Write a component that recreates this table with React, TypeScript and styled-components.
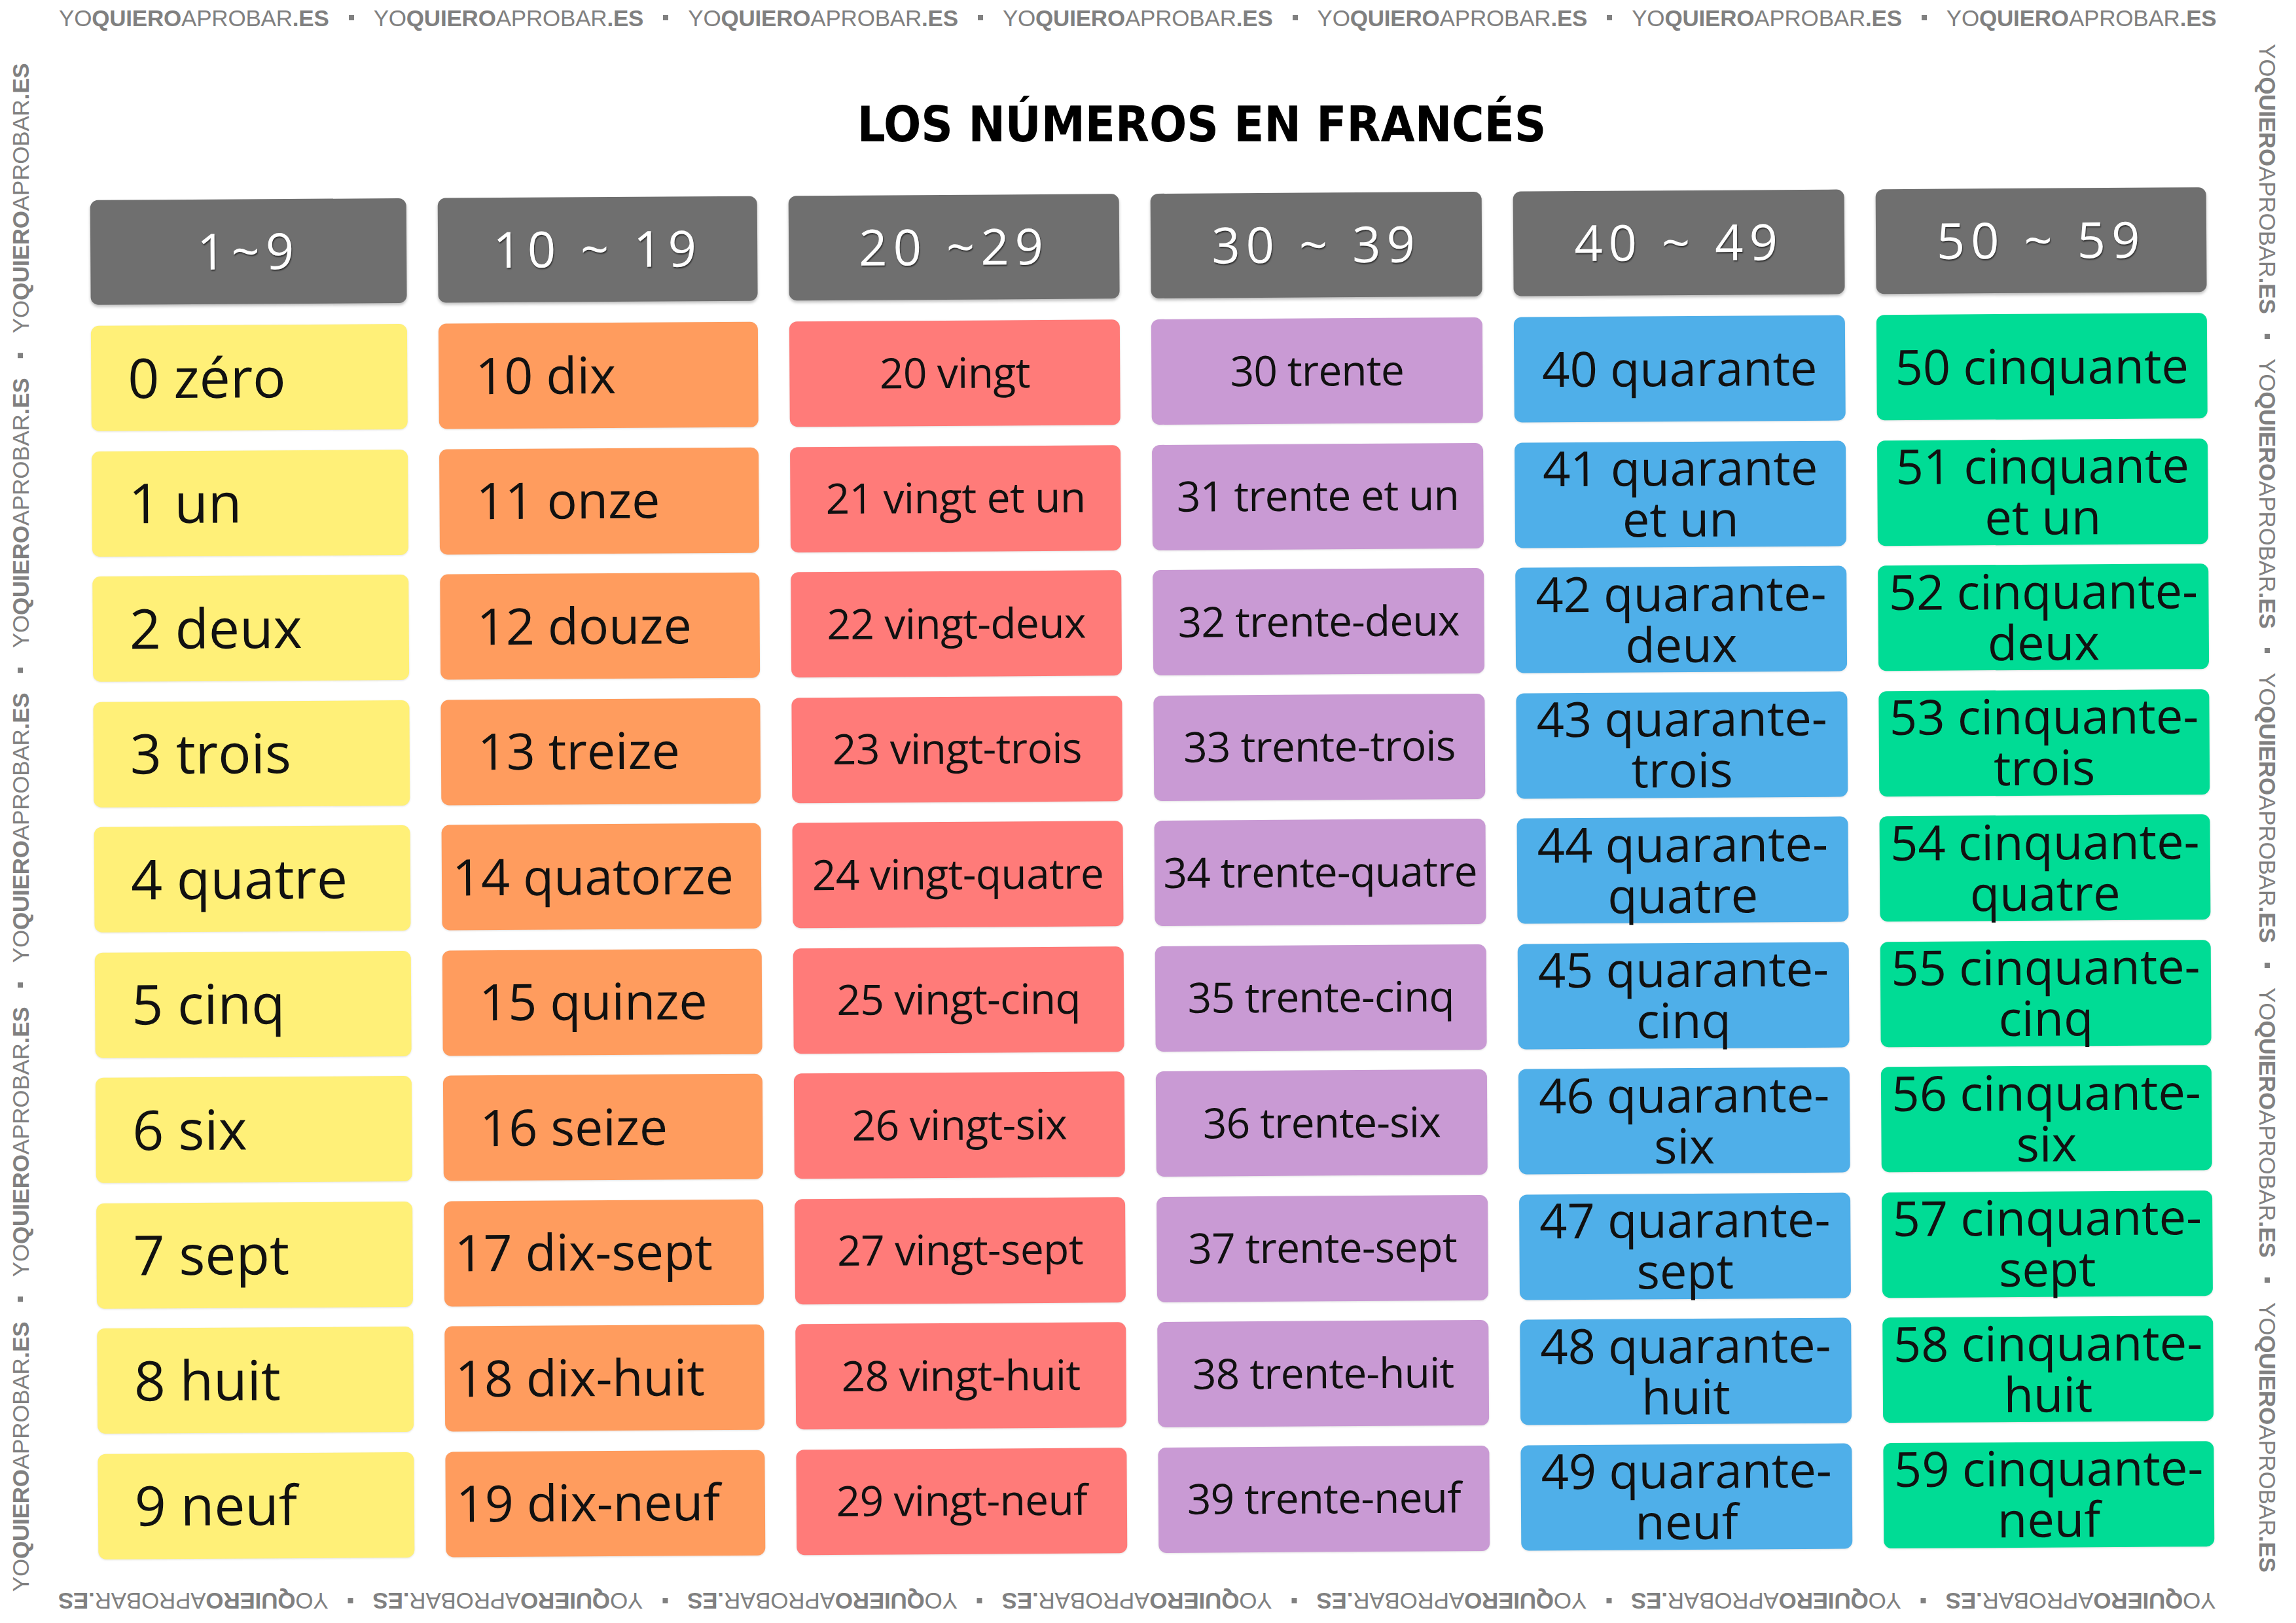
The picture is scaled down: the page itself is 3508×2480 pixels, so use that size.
import React from "react";
import styled, { createGlobalStyle } from "styled-components";

const GlobalStyle = createGlobalStyle`
  html, body {
    margin: 0;
    padding: 0;
    background: #ffffff;
  }
  body {
    width: 3508px;
    height: 2480px;
    overflow: hidden;
  }
`;

const Page = styled.div`
  width: 3508px;
  height: 2480px;
  display: grid;
  grid-template-columns: 62px 1fr 88px;
  grid-template-rows: 54px 1fr 68px;
  background: #ffffff;
  font-family: "Liberation Sans", Arial, sans-serif;
`;

/* ---------- watermark frame ---------- */

const EdgeTop = styled.div`
  grid-column: 2;
  grid-row: 1;
  display: flex;
  align-items: center;
  padding-left: 28px;
`;

const EdgeBottom = styled.div`
  grid-column: 2;
  grid-row: 3;
  display: flex;
  align-items: center;
  padding-left: 27px;
`;

const EdgeLeft = styled.div`
  grid-column: 1;
  grid-row: 1 / 4;
  display: flex;
  flex-direction: column;
  justify-content: flex-end;
  align-items: center;
  padding-bottom: 48px;
`;

const EdgeRight = styled.div`
  grid-column: 3;
  grid-row: 1 / 4;
  display: flex;
  flex-direction: column;
  align-items: center;
  padding-top: 67px;
`;

type Dir = "flat" | "flip" | "up" | "down";

const Strip = styled.div<{ $dir: Dir }>`
  display: inline-flex;
  align-items: center;
  white-space: nowrap;
  font-size: 35px;
  line-height: 1;
  color: #808080;
  writing-mode: ${(p) => (p.$dir === "up" || p.$dir === "down" ? "vertical-rl" : "horizontal-tb")};
  transform: ${(p) => (p.$dir === "up" || p.$dir === "flip" ? "rotate(180deg)" : "none")};
`;

const Word = styled.span`
  font-weight: 400;
  letter-spacing: -0.2px;
`;

const Bold = styled.b`
  font-weight: 700;
`;

const Dot = styled.i`
  display: block;
  width: 8px;
  height: 8px;
  margin-inline: 30px;
  background: #808080;
`;

const Watermark: React.FC<{ dir: Dir; count: number }> = ({ dir, count }) => (
  <Strip $dir={dir}>
    {Array.from({ length: count }).map((_, i) => (
      <React.Fragment key={i}>
        {i > 0 && <Dot />}
        <Word>
          YO<Bold>QUIERO</Bold>APROBAR<Bold>.ES</Bold>
        </Word>
      </React.Fragment>
    ))}
  </Strip>
);

/* ---------- sheet ---------- */

const Main = styled.main`
  grid-column: 2;
  grid-row: 2;
  display: flex;
  flex-direction: column;
  padding: 0 42px 0 82px;
`;

const Title = styled.h1`
  margin: 99px 0 0;
  padding-left: 150px;
  text-align: center;
  font-family: "DejaVu Sans Condensed", "DejaVu Sans", sans-serif;
  font-stretch: condensed;
  font-weight: 700;
  font-size: 75px;
  line-height: 75px;
  color: #000;
`;

const Board = styled.div`
  margin-top: 68px;
  display: grid;
  grid-template-columns: 483px 488px 505px 506px 506px 505px;
  column-gap: 48px;
  transform: rotate(-0.35deg);
`;

const Column = styled.div`
  display: flex;
  flex-direction: column;
  gap: 30.5px;
`;

const Head = styled.div`
  height: 160px;
  margin-bottom: 1.5px;
  display: flex;
  align-items: center;
  justify-content: center;
  background: #6f6f6f;
  border-radius: 12px;
  box-shadow: 0 3px 4px rgba(0, 0, 0, 0.25);
  color: #ffffff;
  font-family: "Open Sans", "DejaVu Sans", sans-serif;
  font-size: 76px;
  letter-spacing: 9px;
  text-shadow: 1px 2px 2px rgba(0, 0, 0, 0.55);
  padding-bottom: 6px;
  box-sizing: border-box;
`;

const Cell = styled.div<{
  $bg: string;
  $align: "left" | "center";
  $size: number;
  $squeeze: number;
  $tight?: boolean;
}>`
  height: 161px;
  box-sizing: border-box;
  display: flex;
  align-items: center;
  justify-content: ${(p) => (p.$align === "left" ? "flex-start" : "center")};
  padding: 0 ${(p) => (p.$align === "left" ? "6px" : "2px")} 4px
    ${(p) => (p.$align === "left" ? (p.$tight ? "16px" : "56px") : "2px")};
  background: ${(p) => p.$bg};
  border-radius: 12px;
  box-shadow: 0 1px 3px rgba(0, 0, 0, 0.12);
  color: #111111;
  font-family: "Open Sans", "DejaVu Sans", sans-serif;
  font-size: ${(p) => p.$size}px;
  letter-spacing: ${(p) => p.$squeeze}px;
  line-height: 78px;
  text-align: center;
  white-space: pre;
`;

type Group = {
  label: string;
  bg: string;
  align: "left" | "center";
  size: number;
  squeeze: number;
  items: string[];
};

const groups: Group[] = [
  {
    label: "1~9",
    bg: "#fff078",
    align: "left",
    size: 84,
    squeeze: 0,
    items: ["0 zéro", "1 un", "2 deux", "3 trois", "4 quatre", "5 cinq", "6 six", "7 sept", "8 huit", "9 neuf"],
  },
  {
    label: "10 ~ 19",
    bg: "#ff9c5e",
    align: "left",
    size: 77,
    squeeze: 0,
    items: [
      "10 dix",
      "11 onze",
      "12 douze",
      "13 treize",
      "14 quatorze",
      "15 quinze",
      "16 seize",
      "17 dix-sept",
      "18 dix-huit",
      "19 dix-neuf",
    ],
  },
  {
    label: "20 ~29",
    bg: "#ff7b79",
    align: "center",
    size: 64,
    squeeze: -0.6,
    items: [
      "20 vingt",
      "21 vingt et un",
      "22 vingt-deux",
      "23 vingt-trois",
      "24 vingt-quatre",
      "25 vingt-cinq",
      "26 vingt-six",
      "27 vingt-sept",
      "28 vingt-huit",
      "29 vingt-neuf",
    ],
  },
  {
    label: "30 ~ 39",
    bg: "#c99ad4",
    align: "center",
    size: 64,
    squeeze: -0.8,
    items: [
      "30 trente",
      "31 trente et un",
      "32 trente-deux",
      "33 trente-trois",
      "34 trente-quatre",
      "35 trente-cinq",
      "36 trente-six",
      "37 trente-sept",
      "38 trente-huit",
      "39 trente-neuf",
    ],
  },
  {
    label: "40 ~ 49",
    bg: "#4fafe9",
    align: "center",
    size: 74,
    squeeze: 0,
    items: [
      "40 quarante",
      "41 quarante\net un",
      "42 quarante-\ndeux",
      "43 quarante-\ntrois",
      "44 quarante-\nquatre",
      "45 quarante-\ncinq",
      "46 quarante-\nsix",
      "47 quarante-\nsept",
      "48 quarante-\nhuit",
      "49 quarante-\nneuf",
    ],
  },
  {
    label: "50 ~ 59",
    bg: "#00dc95",
    align: "center",
    size: 74,
    squeeze: 0,
    items: [
      "50 cinquante",
      "51 cinquante\net un",
      "52 cinquante-\ndeux",
      "53 cinquante-\ntrois",
      "54 cinquante-\nquatre",
      "55 cinquante-\ncinq",
      "56 cinquante-\nsix",
      "57 cinquante-\nsept",
      "58 cinquante-\nhuit",
      "59 cinquante-\nneuf",
    ],
  },
];

export default function App() {
  return (
    <>
      <GlobalStyle />
      <Page>
        <EdgeLeft>
          <Watermark dir="up" count={5} />
        </EdgeLeft>
        <EdgeTop>
          <Watermark dir="flat" count={7} />
        </EdgeTop>
        <Main>
          <Title>LOS NÚMEROS EN FRANCÉS</Title>
          <Board>
            {groups.map((g) => (
              <Column key={g.label}>
                <Head>{g.label}</Head>
                {g.items.map((t) => (
                  <Cell
                    key={t}
                    $bg={g.bg}
                    $align={g.align}
                    $size={g.size}
                    $squeeze={g.squeeze}
                    $tight={t.length >= 10}
                  >
                    {t}
                  </Cell>
                ))}
              </Column>
            ))}
          </Board>
        </Main>
        <EdgeBottom>
          <Watermark dir="flip" count={7} />
        </EdgeBottom>
        <EdgeRight>
          <Watermark dir="down" count={5} />
        </EdgeRight>
      </Page>
    </>
  );
}
